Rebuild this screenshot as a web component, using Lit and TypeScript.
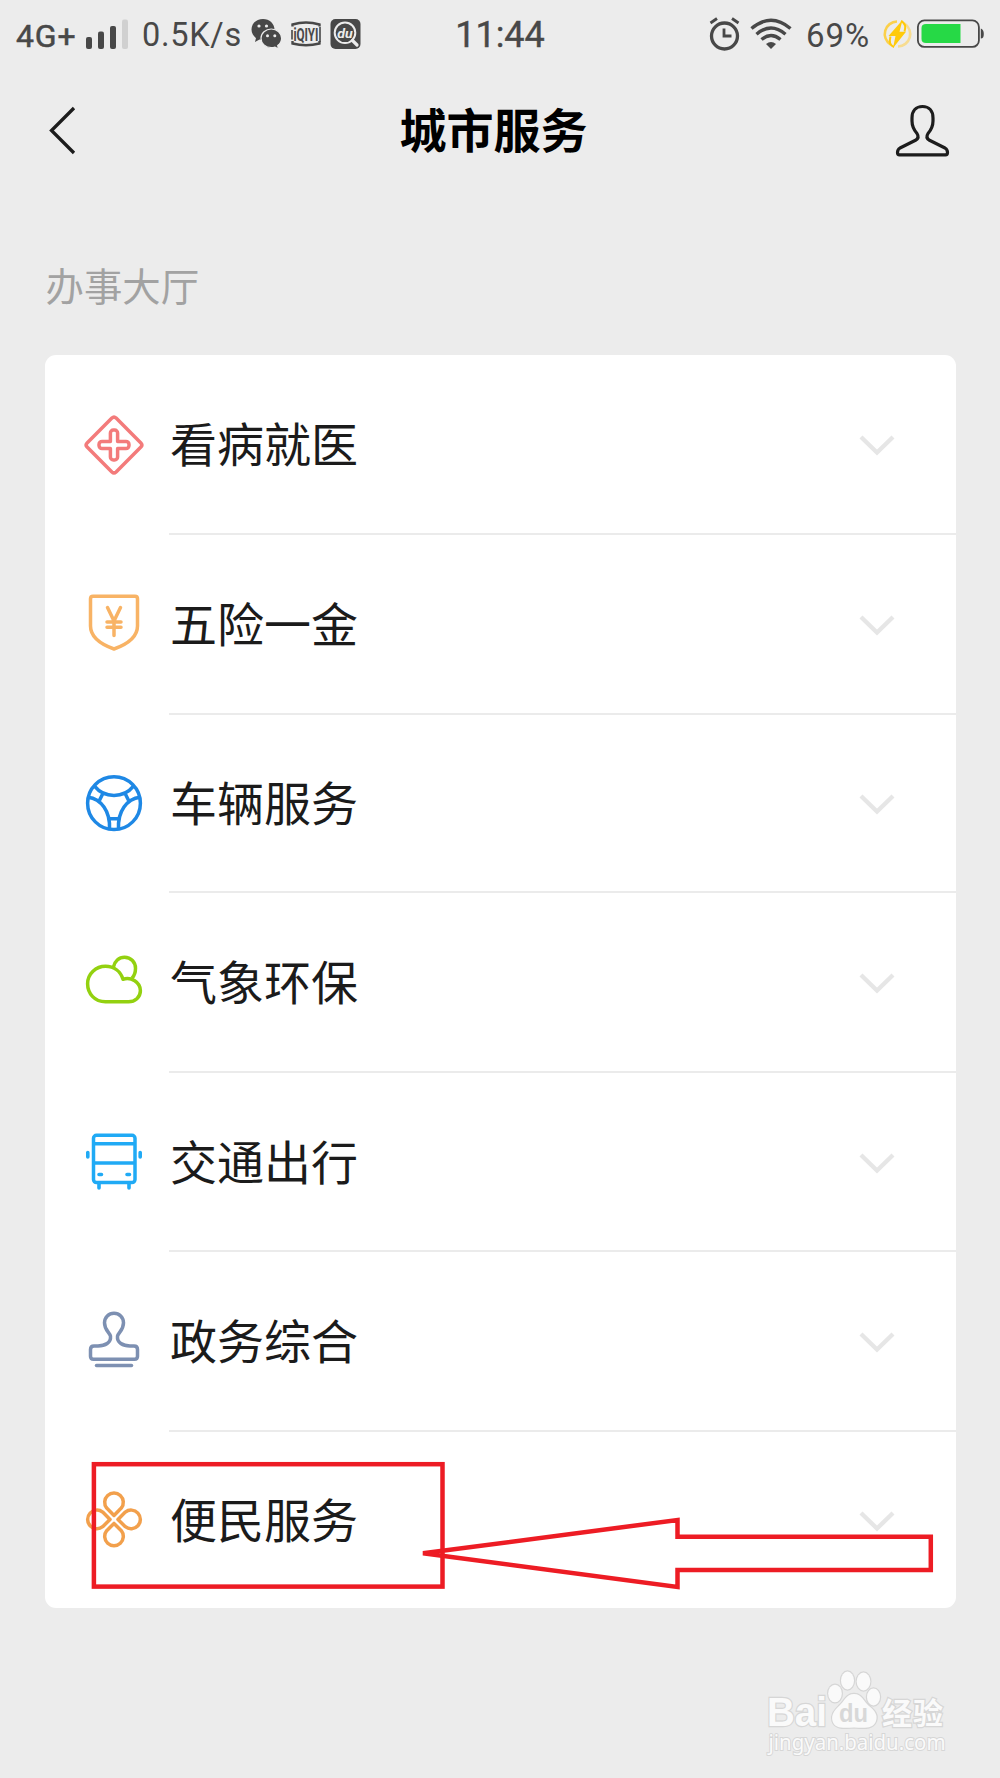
import { LitElement, html, svg, css } from "lit";
import { customElement } from "lit/decorators.js";

const services = [
  { name: "看病就医", color: "#f37b7b", height: 180, icon: svg`
    <path d="M27.9 3.1Q30 1.1 32.1 3.1L56.9 27.9Q58.9 30 56.9 32.1L32.1 56.9Q30 58.9 27.9 56.9L3.1 32.1Q1.1 30 3.1 27.9Z"/>
    <path d="M26.4 18a3 3 0 0 1 3-3h1.200a3 3 0 0 1 3 3v8.400H42a3 3 0 0 1 3 3v1.200a3 3 0 0 1-3 3h-8.400V42a3 3 0 0 1-3 3h-1.200a3 3 0 0 1-3-3v-8.400H18a3 3 0 0 1-3-3v-1.200a3 3 0 0 1 3-3h8.400Z"/>` },
  { name: "五险一金", color: "#f8b365", height: 180, icon: svg`
    <path d="M9 1.200H51Q53.500 1.200 53.500 3.700V31C53.500 42 44 49 30 54C16 49 6.500 42 6.500 31V3.700Q6.500 1.200 9 1.200Z"/>
    <path d="M23.500 12.500 30 26 36.500 12.500M30 26V40.500M23 27H37M23 32.300H37" stroke-linecap="round"/>` },
  { name: "车辆服务", color: "#1e88e5", height: 178, icon: svg`
    <g transform="translate(0 -.8)"><circle cx="30" cy="30" r="26.400"/>
    <path d="M10.500 13Q18 22.300 30 22.300Q42 22.300 49.500 13M4 24C17 25.500 26.500 38 25.500 56M56 24C43 25.500 33.500 38 34.500 56M26 45.500H34M19 20 15.500 27M41 20 44.500 27"/></g>` },
  { name: "气象环保", color: "#93d110", height: 180, icon: svg`
    <g transform="translate(0 -3.2)"><path d="M21.500 52C10.500 52 3.600 43.500 3.600 34C3.600 24 12 16.500 21.500 16.500C30 16.500 36.500 21.500 39 29.500C47 27 56.400 32 56.400 41C56.400 47.500 51 52 44.500 52Z"/>
    <path d="M29.300 17.500C30.500 11.500 35 7.500 40.500 7.500C47 7.500 51.500 12.500 51.500 18.500C51.500 22.500 50.300 26 48 28.500"/></g>` },
  { name: "交通出行", color: "#20aaf5", height: 179, icon: svg`
    <g transform="translate(0 -1.5)"><rect x="9.500" y="3.800" width="41.500" height="47.300" rx="3"/>
    <path d="M9.500 12.300H51M9.500 31.500H51"/>
    <path d="M15 43H17.500M43 43H45.500M3.800 21V25.500M56.200 21V25.500M15 51.500V56.500M45 51.500V56.500" stroke-linecap="round" stroke-width="3.600"/></g>` },
  { name: "政务综合", color: "#7d90b2", height: 180, icon: svg`
    <path transform="translate(0 -.8)" d="M26.500 25C25.500 21 20.500 19 20.500 11.500A9.500 9.500 0 0 1 39.500 11.500C39.500 19 34.500 21 33.500 25C32.800 31.500 39 34.800 46 34.800H50Q53.500 34.800 53.500 38.300V45Q53.500 48 50.500 48H9.500Q6.500 48 6.500 45V38.300Q6.500 34.800 10 34.800H14C21 34.800 27.200 31.500 26.500 25Z"/>
    <path d="M12.500 53.600H47.500" stroke-linecap="round"/>` },
  { name: "便民服务", color: "#f2a04c", height: 176, icon: svg`
    <g transform="translate(0 -.6)"><path d="M30 26 22.700 18.700A9.300 9.300 0 1 1 37.300 18.700Z"/>
    <path d="M30 34 22.700 41.300A9.300 9.300 0 1 0 37.300 41.300Z"/>
    <path d="M26 30 18.700 22.700A9.300 9.300 0 1 0 18.700 37.300Z"/>
    <path d="M34 30 41.300 22.700A9.300 9.300 0 1 1 41.300 37.300Z"/></g>` },
];

@customElement("app-root")
export class AppRoot extends LitElement {
  static styles = css`
    :host {
      display: block;
      position: relative;
      width: 1000px;
      height: 1778px;
      overflow: hidden;
      background: #ececec;
      font-family: "Noto Sans CJK SC", sans-serif;
      color: #1b1b1b;
    }
    svg { display: block; flex: none; overflow: visible; }
    .status {
      display: grid;
      grid-template-columns: 1fr auto 1fr;
      align-items: center;
      height: 68px;
      padding: 0 16px;
      font-family: Roboto, sans-serif;
      color: #484848;
      line-height: 1;
      white-space: nowrap;
    }
    .side { display: flex; align-items: center; }
    .right { justify-content: flex-end; }
    .net { font-size: 32px; width: 70px; margin-top: 4px; letter-spacing: 0.800px; -webkit-text-stroke: 0.500px #484848; }
    .speed { font-size: 32.500px; width: 109px; margin-left: 14px; letter-spacing: 0.700px; margin-top: 2px; }
    .clock { font-size: 36px; margin-top: 2px; -webkit-text-stroke: 0.400px #484848; }
    .pct { font-size: 33px; width: 68px; margin: 2px 9px 0 13px; letter-spacing: 1px; }
    .gap { margin-left: 10px; }
    .alarm, .wifi { position: relative; left: -1.500px; }
    .bar {
      display: grid;
      grid-template-columns: 100px 1fr 100px;
      align-items: center;
      height: 124px;
    }
    .title { text-align: center; font-size: 47px; line-height: 60px; font-weight: 700; color: #000; padding: 0 13px 5px 0; margin: 0; }
    .back { margin-left: 48px; }
    .person { margin-left: -6px; }
    .section { margin: 64px 0 0 45.500px; font-size: 38.400px; line-height: 56px; height: 99.400px; color: #a2a2a2; font-weight: 400; }
    .card { margin: 0 44.500px 0 44.500px; background: #fff; border-radius: 11px; overflow: hidden; }
    .row { display: flex; padding-left: 39.500px; }
    .icon { align-self: center; width: 60px; height: 60px; fill: none; stroke-width: 3.500; stroke-linejoin: round; }
    .body {
      flex: 1;
      display: flex;
      align-items: center;
      justify-content: space-between;
      box-sizing: border-box;
      margin-left: 25px;
      padding-right: 59.500px;
      border-bottom: 2px solid #ebebeb;
    }
    .row:last-child .body { border-bottom: 0; }
    .name { font-size: 47px; line-height: 60px; padding: 0 0 4px 1px; }
    .marks, .watermark { position: absolute; left: 0; top: 0; pointer-events: none; }
  `;

  private statusBar() {
    return html`<div class="status">
      <div class="side">
        <span class="net">4G+</span>
        <svg width="42" height="32" viewBox="0 0 42 32" fill="#484848">
          <rect x="0" y="19" width="6" height="12" rx="2"/><rect x="12" y="13.500" width="6" height="17.500" rx="2"/>
          <rect x="24" y="8" width="6" height="23" rx="2"/><rect x="36" y="1.500" width="6" height="29.500" rx="2" fill="#d0d0d0"/>
        </svg>
        <span class="speed">0.5K/s</span>
        <svg width="31" height="32" viewBox="0 0 31 32">
          <path fill="#484848" d="M12 1C5.500 1 .500 5.600.500 11.500C.500 15 2.300 18 5 20L4 24L8.500 21.600Q10 22 12 22C18.500 22 23.500 17.300 23.500 11.500S18.500 1 12 1Z"/>
          <path fill="#484848" stroke="#ececec" stroke-width="1.200" d="M20.300 11C14.500 11 10 15.200 10 20.300S14.500 29.700 20.300 29.700Q22.300 29.700 24 29.100L27.500 31L26.700 27.600C29.200 25.900 30.600 23.300 30.600 20.300C30.600 15.200 26.100 11 20.300 11Z"/>
          <g fill="#ececec"><circle cx="8" cy="8" r="1.600"/><circle cx="15.500" cy="8" r="1.600"/><circle cx="16.500" cy="17.700" r="1.500"/><circle cx="23.800" cy="17.700" r="1.500"/></g>
        </svg>
        <svg style="margin-left:9px" width="30" height="32" viewBox="0 0 30 32" fill="none" stroke="#484848">
          <path stroke-width="2.400" d="M1.500 8.500V6.500Q15 2.500 28.500 6.500V8.500M1.500 23V25.500Q15 29 28.500 25.500V23"/>
          <path stroke-width="1.600" d="M1 12V21.500M29 9V24"/>
          <text x="2.500" y="22.500" textLength="25" lengthAdjust="spacingAndGlyphs" font-family="Roboto" font-weight="700" font-size="18.500" fill="#484848" stroke="none">iQIYI</text>
        </svg>
        <svg style="margin-left:9px" width="31" height="32" viewBox="0 0 31 32">
          <rect x=".500" y="1" width="30" height="30" rx="5" fill="#484848"/>
          <circle cx="15" cy="14.800" r="10.300" fill="none" stroke="#ececec" stroke-width="2"/>
          <path d="M22.500 22.500L27 27" stroke="#ececec" stroke-width="3.200" stroke-linecap="round"/>
          <text x="7.200" y="19.500" textLength="15.500" lengthAdjust="spacingAndGlyphs" font-family="Roboto" font-style="italic" font-weight="700" font-size="13.500" fill="#ececec">du</text>
        </svg>
      </div>
      <span class="clock">11:44</span>
      <div class="side right">
        <svg class="alarm" width="31" height="34" viewBox="0 0 31 34" fill="none" stroke="#484848">
          <circle cx="15.500" cy="19" r="13" stroke-width="3.300"/>
          <path stroke-width="2.800" d="M15 11.500V19H22.500M1.500 6 8 1.500M29.500 6 23 1.500"/>
        </svg>
        <svg class="gap wifi" width="42" height="32" viewBox="0 0 42 32" fill="none" stroke="#484848" stroke-width="3.400">
          <path d="M1.500 10.500Q21-6 40.500 10.500M6.500 16.200Q21 3.800 35.500 16.200M11.500 21.500Q21 13.500 30.500 21.500"/>
          <path fill="#484848" stroke="none" d="M16 26Q21 21.800 26 26L21 31Z"/>
        </svg>
        <span class="pct">69%</span>
        <svg width="29" height="30" viewBox="0 0 29 30" fill="none">
          <path stroke="#fbd04a" stroke-width="2.600" d="M14 2.500A12.500 12.500 0 0 0 7.500 25.500"/>
          <path stroke="#f7dc90" stroke-width="2.600" d="M15 27.500A12.500 12.500 0 0 0 21.500 4.500"/>
          <path stroke="#ffca0a" stroke-width="2" d="M7.500 17.500Q5 26 11 28M21.500 12.500Q24 5 18 2"/>
          <path fill="#ffca0a" d="M19.500 1 5.500 17H12.500L10 29 23 12.800H16.500Z"/>
        </svg>
        <svg style="margin-left:5px" width="67" height="30" viewBox="0 0 67 30">
          <rect x=".900" y="1.400" width="61" height="26.500" rx="6.500" fill="none" stroke="#484848" stroke-width="1.800"/>
          <path fill="#26d946" d="M9 5H43.500V24H9Q4.500 24 4.500 20V9Q4.500 5 9 5Z"/>
          <path fill="#484848" d="M63.800 9.500Q66.800 10.500 66.800 15T63.800 19.500Z"/>
        </svg>
      </div>
    </div>`;
  }

  render() {
    return html`
      ${this.statusBar()}
      <header class="bar">
        <svg class="back" width="28" height="50" viewBox="0 0 28 50" fill="none" stroke="#1c1c1c" stroke-width="3.300"><path d="M26 3 3.500 25.500 26 48"/></svg>
        <h1 class="title">城市服务</h1>
        <svg class="person" width="58" height="54" viewBox="0 0 58 54" fill="none" stroke="#1c1c1c" stroke-width="3.200" stroke-linejoin="round">
          <path d="M28.500 3.500C22 3.500 18 8 18 15V18C18 23 20 27 23 30.500Q25.500 34.500 22 37L6 45Q3.500 46.500 3.500 49.500Q3.500 51.800 5.500 51.800H51.500Q53.500 51.800 53.500 49.500Q53.500 46.500 51 45L35 37Q31.500 34.500 34 30.500C37 27 39 23 39 18V15C39 8 35 3.500 28.500 3.500Z"/>
        </svg>
      </header>
      <h2 class="section">办事大厅</h2>
      <main class="card">
        ${services.map((s) => html`<div class="row" style="height:${s.height}px">
          <svg class="icon" viewBox="0 0 60 60" style="stroke:${s.color}">${s.icon}</svg>
          <div class="body">
            <span class="name">${s.name}</span>
            <svg width="37" height="22" viewBox="0 0 37 22" fill="none" stroke="#e6e6e6" stroke-width="4.300"><path d="M2 4 18 19.500 34 4"/></svg>
          </div>
        </div>`)}
      </main>
      <svg class="marks" width="1000" height="1778" fill="none" stroke="#ed1c24" stroke-width="4.500">
        <rect x="93.900" y="1464.200" width="348.600" height="122.400"/>
        <path d="M423 1553.300 677.500 1520V1536.700H930.800V1570H677.500V1587Z"/>
      </svg>
      <svg class="watermark" width="1000" height="1778" fill="#fafafa" stroke="#d6d6d6" stroke-width="2.400" paint-order="stroke">
        <text x="767" y="1726" textLength="60" lengthAdjust="spacingAndGlyphs" font-family="Liberation Sans" font-weight="700" font-size="40">Bai</text>
        <ellipse cx="835" cy="1693.500" rx="6.800" ry="8.800"/><ellipse cx="847.500" cy="1680.500" rx="6.500" ry="9"/>
        <ellipse cx="863.500" cy="1681.500" rx="6.800" ry="9"/><ellipse cx="873.500" cy="1697" rx="6.500" ry="8.500"/>
        <path d="M854 1694C862 1694 864 1702 869 1706C875 1711 878 1715 876 1721C873 1729 865 1728 854 1727.500C843 1728 835 1729 832.500 1721C831 1715 834 1711 839 1706C844 1702 846 1694 854 1694Z"/>
        <text x="839" y="1722" textLength="29" lengthAdjust="spacingAndGlyphs" font-family="Liberation Sans" font-weight="700" font-size="25" fill="#d8d8d8" stroke="none">du</text>
        <text x="882" y="1723.500" textLength="61" font-family="Noto Sans CJK SC" font-weight="700" font-size="30">经验</text>
        <text x="768.500" y="1750" textLength="177" lengthAdjust="spacingAndGlyphs" font-family="Noto Sans" font-size="22" stroke-width="2">jingyan.baidu.com</text>
      </svg>`;
  }
}
